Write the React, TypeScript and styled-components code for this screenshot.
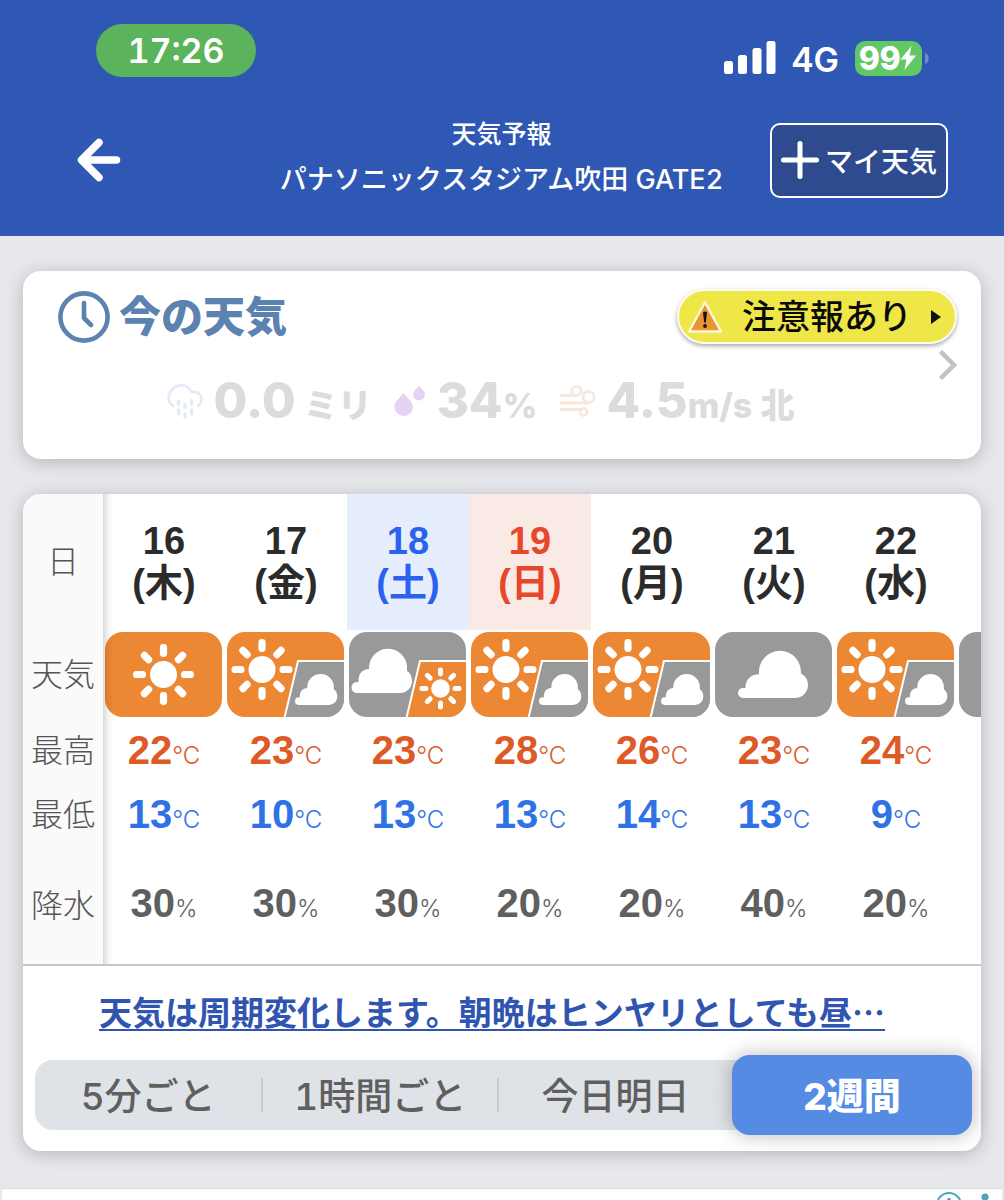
import React from "react";
import styled, { createGlobalStyle, css } from "styled-components";

const ui = `Inter, "Noto Sans CJK JP", sans-serif`;
const grotesk = `"Liberation Sans", "Noto Sans CJK JP", sans-serif`;
const japanese = `"Noto Sans CJK JP", sans-serif`;

const GlobalStyle = createGlobalStyle`
  *, *::before, *::after { box-sizing: border-box; }
  body { margin: 0; background: #e6e8ec; font-family: ${ui}; font-variant-numeric: tabular-nums; }
  button { font: inherit; border: 0; padding: 0; background: none; cursor: pointer; }
  svg { display: block; flex: none; }
`;

const Screen = styled.div`
  height: 100vh;
  display: flex;
  flex-direction: column;
  overflow: hidden;
`;

/* ---------- header ---------- */
const Header = styled.header`
  flex: none;
  background: #2f57b4;
  color: #fff;
  padding: 24px 56px 28px 77px;
`;
const StatusBar = styled.div`
  display: flex;
  justify-content: space-between;
  align-items: flex-start;
  padding: 0 19px;
`;
const TimePill = styled.div`
  width: 160px;
  height: 53px;
  border-radius: 27px;
  background: #5bb45c;
  font-size: 34px;
  font-weight: 600;
  line-height: 54px;
  text-align: center;
`;
const StatusRight = styled.div`
  display: flex;
  align-items: center;
  gap: 16px;
  padding-top: 14px;
  font-size: 34px;
  font-weight: 600;
  line-height: 36px;
`;
const Network = styled.span`
  padding-top: 4px;
`;
const Battery = styled.div`
  display: flex;
  align-items: center;
  gap: 3px;
`;
const BatteryBody = styled.div`
  display: flex;
  align-items: center;
  width: 67px;
  height: 35px;
  padding-left: 4px;
  border-radius: 10px;
  background: #62c866;
  font-size: 32px;
  font-weight: 800;
  line-height: 35px;
`;
const NavBar = styled.div`
  display: grid;
  grid-template-columns: 156px 1fr 178px;
  align-items: center;
  margin-top: 34px;
`;
const BackButton = styled.button`
  justify-self: start;
`;
const TitleBlock = styled.div`
  justify-self: center;
  padding-bottom: 6px;
  text-align: center;
  white-space: nowrap;
`;
const Title = styled.h1`
  margin: 0;
  font-size: 25px;
  font-weight: 500;
  line-height: 45px;
`;
const Place = styled.p`
  margin: 0;
  font-size: 27px;
  font-weight: 500;
  line-height: 45px;
`;
const AddButton = styled.button`
  display: flex;
  align-items: center;
  justify-content: center;
  gap: 6px;
  height: 75px;
  border: 2px solid #fff;
  border-radius: 10px;
  background: #2e4b8f;
  color: #fff;
  font-size: 28px;
  font-weight: 500;
  white-space: nowrap;
`;

/* ---------- cards ---------- */
const Main = styled.main`
  flex: none;
  display: grid;
  grid-template-columns: minmax(0, 1fr);
  gap: 35px;
  padding: 35px 23px 37px;
`;
const Card = styled.section`
  background: #fff;
  border-radius: 18px;
  box-shadow: 0 3px 18px rgba(0, 0, 0, 0.22);
`;
const NowCard = styled(Card)`
  padding: 18px 24px 31px 35px;
`;
const NowHead = styled.div`
  display: flex;
  justify-content: space-between;
  align-items: center;
`;
const NowTitle = styled.h2`
  display: flex;
  align-items: center;
  gap: 9px;
  margin: 0;
  color: #5c82b0;
  font-size: 42px;
  font-weight: 900;
  line-height: 54px;
`;
const Alert = styled.a`
  display: flex;
  align-items: center;
  height: 55px;
  padding: 0 14px 0 8px;
  border: 2px solid #fdfdf4;
  border-radius: 28px;
  background: #efe648;
  box-shadow: 0 2px 4px rgba(0, 0, 0, 0.35);
  color: #0a0a0a;
  font-size: 34px;
  font-weight: 500;
  line-height: 50px;
  text-decoration: none;
`;
const AlertText = styled.span`
  padding: 0 19px;
`;
const NowBody = styled.div`
  display: flex;
  align-items: flex-start;
  padding-top: 6px;
`;
const Metrics = styled.div`
  flex: 1;
  display: flex;
  justify-content: center;
  gap: 22px;
  padding: 24px 36px 0 0;
  color: #dcdcdc;
  font-variant-numeric: normal;
`;
const Metric = styled.div`
  display: flex;
  align-items: center;
  gap: 11px;
`;
const Value = styled.span`
  font-size: 49px;
  font-weight: 800;
  line-height: 54px;
  white-space: nowrap;
`;
const Unit = styled.span<{ $spaced?: boolean }>`
  font-size: 34px;
  font-weight: 800;
  line-height: 34px;
  ${(p) => p.$spaced && css`margin-left: 8px;`}
`;

/* ---------- forecast ---------- */
const Scroller = styled.div`
  overflow: hidden;
  border-radius: 18px 18px 0 0;
  border-bottom: 2px solid #c6c6c6;
`;
const Table = styled.table`
  width: 1056px;
  table-layout: fixed;
  border-collapse: separate;
  border-spacing: 0;
  font-family: ${grotesk};
  td, th { padding: 0; text-align: center; }
`;
const LabelCol = styled.col`
  width: 80px;
`;
const Row = styled.tr<{ $h: number }>`
  height: ${(p) => p.$h}px;
`;
const Label = styled.th`
  position: sticky;
  left: 0;
  z-index: 1;
  background: #fafafa;
  color: #555;
  font-size: 32px;
  font-weight: 300;
  line-height: 40px;
  &::after {
    content: "";
    position: absolute;
    top: 0;
    bottom: 0;
    left: 100%;
    width: 11px;
    background: linear-gradient(to right, rgba(0, 0, 0, 0.15), rgba(0, 0, 0, 0.04) 50%, transparent);
  }
`;
const dayColors = {
  week: ["#2b2b2b", "transparent"],
  sat: ["#2a62ee", "#e6edfd"],
  sun: ["#e8482a", "#faeae6"],
};
type DayKind = keyof typeof dayColors;
const DayCell = styled.th<{ $kind: DayKind }>`
  color: ${(p) => dayColors[p.$kind][0]};
  background: ${(p) => dayColors[p.$kind][1]};
  font-size: 38px;
  font-weight: 700;
  line-height: 42px;
`;
const DayName = styled.span`
  display: block;
`;
const IconCell = styled.td`
  svg { margin: 0 2px; }
`;
const tones = { high: "#dd5a26", low: "#2f72e6", rain: "#5f5f5f" };
const NumCell = styled.td<{ $tone: keyof typeof tones }>`
  && { padding-top: ${(p) => (p.$tone === "rain" ? 0 : 4)}px; }
  color: ${(p) => tones[p.$tone]};
  font-size: 40px;
  font-weight: 700;
  line-height: 48px;
  white-space: nowrap;
`;
const Small = styled.span`
  font-family: ${ui};
  font-size: 24px;
  font-weight: 300;
`;

const Comment = styled.p`
  margin: 0;
  padding: 18px 86px 0 66px;
  text-align: center;
  font-family: ${japanese};
  font-size: 33px;
  font-weight: 700;
  line-height: 54px;
  white-space: nowrap;
`;
const CommentLink = styled.a`
  color: #2f55b0;
  text-decoration: underline;
  text-decoration-thickness: 2px;
  text-underline-offset: 4px;
`;
const Tabs = styled.div`
  display: grid;
  grid-template-columns: 57fr 59fr 58fr 60fr;
  grid-template-rows: 100%;
  align-items: center;
  height: 70px;
  margin: 22px 9px 21px 12px;
  border-radius: 18px;
  background: #dfe2e6;
`;
const Tab = styled.button<{ $active?: boolean; $divided?: boolean }>`
  height: 34px;
  color: #5f5f5f;
  font-size: 37px;
  font-weight: 500;
  line-height: 38px;
  white-space: nowrap;
  ${(p) => p.$divided && css`border-right: 2px solid #c9cbcf;`}
  ${(p) => p.$active && css`
    height: 80px;
    padding-top: 4px;
    border-radius: 18px;
    background: #568be4;
    color: #fff;
    font-weight: 800;
    box-shadow: 0 0 20px rgba(0, 0, 0, 0.28);
  `}
`;

/* ---------- advertisement strip ---------- */
const AdStrip = styled.aside`
  flex: 1;
  min-height: 0;
  display: flex;
  justify-content: flex-end;
  gap: 19px;
  margin: 0 2px;
  padding: 3px 13px 0 0;
  overflow: hidden;
  background: #fff;
  border-top: 1px solid #dcdcdc;
`;

/* ---------- drawings ---------- */
const angles = [0, 45, 90, 135, 180, 225, 270, 315];

const Sun = ({ x, y, k = 1 }: { x: number; y: number; k?: number }) => (
  <g transform={`translate(${x} ${y}) scale(${k})`} fill="#fff">
    <circle r="13.5" />
    {angles.map((a) => (
      <rect key={a} x="-3.6" y="-30.5" width="7.2" height="13" rx="3.4" transform={`rotate(${a})`} />
    ))}
  </g>
);
const Cloud = ({ x, y, k = 1 }: { x: number; y: number; k?: number }) => (
  <path
    transform={`translate(${x} ${y}) scale(${k})`}
    fill="#fff"
    d="M5 47a5 5 0 0 1 0-10h2.500C7 29 13 23 21.100 23.200A21 21 0 1 1 62.900 22.500C68 25 70 29.500 70 34A13 13 0 0 1 57 47Z"
  />
);
/* narrower outline used where a second symbol shares the tile */
const SlimCloud = ({ x, y, k = 1 }: { x: number; y: number; k?: number }) => (
  <path
    transform={`translate(${x} ${y}) scale(${k})`}
    fill="#fff"
    d="M5.500 47a5.500 5.500 0 0 1 0-11h1.500C6.500 28 11 23 17.500 23A19 19 0 1 1 55.500 20.500V25C58.500 26.500 60.500 30.500 60.500 35A12 12 0 0 1 48.500 47Z"
  />
);

type Sky = "sun" | "sunCloud" | "cloudSun" | "cloud";
const names: Record<Sky, string> = { sun: "晴れ", sunCloud: "晴れ時々曇り", cloudSun: "曇り時々晴れ", cloud: "曇り" };
const ORANGE = "#ec8733";
const GRAY = "#999";

const WeatherIcon = ({ sky, id }: { sky: Sky; id: string }) => {
  const base = sky === "sun" || sky === "sunCloud" ? ORANGE : GRAY;
  const sub = sky === "sunCloud" ? GRAY : ORANGE;
  return (
    <svg width="117" height="85" viewBox="0 0 117 85" role="img" aria-label={names[sky]}>
      <clipPath id={id}><rect width="117" height="85" rx="18" /></clipPath>
      <g clipPath={`url(#${id})`}>
        <rect width="117" height="85" fill={base} />
        {sky === "sun" && <Sun x={58.5} y={42.5} />}
        {sky === "cloud" && <Cloud x={23} y={19} />}
        {sky === "sunCloud" && <Sun x={35} y={37.5} />}
        {sky === "cloudSun" && <SlimCloud x={2.5} y={14} />}
        {(sky === "sunCloud" || sky === "cloudSun") && (
          <>
            <path d="M71 29H120V90H56.500Z" fill={sub} stroke="#fff" strokeWidth="2" />
            {sky === "sunCloud" ? <SlimCloud x={68} y={40} k={0.7} /> : <Sun x={91.5} y={56.5} k={0.69} />}
          </>
        )}
      </g>
    </svg>
  );
};

const SignalIcon = () => (
  <svg width="52" height="34" viewBox="0 0 52 34" fill="#fff" aria-hidden="true">
    <rect x="0" y="20" width="9" height="13" rx="2.5" />
    <rect x="14" y="14" width="9" height="19" rx="2.5" />
    <rect x="28.5" y="7" width="9" height="26" rx="2.5" />
    <rect x="42.5" y="0" width="9" height="33" rx="2.5" />
  </svg>
);
const BoltIcon = () => (
  <svg width="16" height="24" viewBox="0 0 16 24" fill="#fff" aria-hidden="true">
    <path d="M11.500 0 0.500 13.500H6.500L4.500 24 16 9.500H9.500Z" />
  </svg>
);
const BatteryTip = () => (
  <svg width="4" height="11" viewBox="0 0 4 11" aria-hidden="true">
    <path d="M0 0C5 1 5 10 0 11Z" fill="#6f8ccb" />
  </svg>
);
const BackIcon = () => (
  <svg width="44" height="44" viewBox="0 0 44 44" fill="none" stroke="#fff" strokeWidth="7.5" strokeLinecap="round" strokeLinejoin="round" aria-hidden="true">
    <path d="M22 4.500 4.500 22 22 39.500M5 22H39.500" />
  </svg>
);
const PlusIcon = () => (
  <svg width="38" height="38" viewBox="0 0 38 38" stroke="#fff" strokeWidth="5" strokeLinecap="round" aria-hidden="true">
    <path d="M19 2.500V35.500M2.500 19H35.500" />
  </svg>
);
const ClockIcon = () => (
  <svg width="52" height="52" viewBox="0 0 52 52" fill="none" stroke="#5c82b0" strokeWidth="4.6" strokeLinecap="round" strokeLinejoin="round" aria-hidden="true">
    <circle cx="26" cy="26" r="23.6" />
    <path d="M26 12V27L33 34" />
  </svg>
);
const WarningIcon = () => (
  <svg width="36" height="34" viewBox="0 0 36 34" aria-hidden="true">
    <path d="M18 2.500 34 31.500H2Z" fill="#eb9433" stroke="#fff8d8" strokeWidth="2.4" strokeLinejoin="round" />
    <path d="M16 12.500Q18 10.500 20 12.500L18.800 22.500H17.200Z" fill="#111" />
    <circle cx="18" cy="26" r="1.9" fill="#111" />
  </svg>
);
const PlayIcon = () => (
  <svg width="10" height="14" viewBox="0 0 10 14" aria-hidden="true"><path d="M0 0 10 7 0 14Z" fill="#111" /></svg>
);
const ChevronIcon = () => (
  <svg width="18" height="30" viewBox="0 0 18 30" fill="none" stroke="#c2c2c2" strokeWidth="4.5" aria-hidden="true">
    <path d="M1.500 1.500 15 15 1.500 28.500" />
  </svg>
);
const RainIcon = () => (
  <svg width="36" height="36" viewBox="0 0 36 36" fill="none" stroke="#e2eaf6" strokeWidth="2.6" strokeLinecap="round" aria-hidden="true">
    <path d="M6 23C0 18 .500 11 5.500 6C11 .500 21 1 24.500 9C31 7.500 35 12 34.500 17C34.300 19.500 33 21.500 31.500 23" />
    <path d="M11.500 18V21M11.500 27V31M18 21.500V24.500M18 31V34M24.500 18V21M24.500 27V31" strokeWidth="3.4" />
  </svg>
);
const DropsIcon = () => (
  <svg width="32" height="30" viewBox="0 0 32 30" fill="#e5d3f5" aria-hidden="true">
    <path d="M9.500 7C13 12 19 15.500 19 21A9.300 9 0 0 1 .400 21C.400 15.500 6 12 9.500 7Z" />
    <path d="M25 0C27 3 31 5 31 8.500A6 6 0 0 1 19 8.500C19 5 23 3 25 0Z" />
  </svg>
);
const WindIcon = () => (
  <svg width="36" height="32" viewBox="0 0 36 32" fill="none" stroke="#f8e8da" strokeWidth="2.8" aria-hidden="true">
    <path d="M0 10.500H16M0 18H28M0 24.500H23" />
    <circle cx="16.5" cy="6" r="4.6" />
    <circle cx="28.5" cy="12" r="5.6" />
    <circle cx="23.5" cy="27" r="3.6" />
  </svg>
);
const AdInfoIcon = () => (
  <svg width="26" height="26" viewBox="0 0 26 26" fill="none" stroke="#4aa7bd" aria-hidden="true">
    <circle cx="13" cy="13" r="12" strokeWidth="2" />
    <circle cx="13" cy="7.5" r="1.8" fill="#4aa7bd" stroke="none" />
    <path d="M13 11V20" strokeWidth="3" />
  </svg>
);
const AdMenuIcon = () => (
  <svg width="8" height="28" viewBox="0 0 8 28" fill="#4aa7bd" aria-hidden="true">
    <circle cx="4" cy="5" r="3.6" /><circle cx="4" cy="15" r="3.6" /><circle cx="4" cy="25" r="3.6" />
  </svg>
);

/* ---------- data ---------- */
const days: { date: number; name: string; kind: DayKind; sky: Sky; high: number; low: number; rain: number }[] = [
  { date: 16, name: "木", kind: "week", sky: "sun", high: 22, low: 13, rain: 30 },
  { date: 17, name: "金", kind: "week", sky: "sunCloud", high: 23, low: 10, rain: 30 },
  { date: 18, name: "土", kind: "sat", sky: "cloudSun", high: 23, low: 13, rain: 30 },
  { date: 19, name: "日", kind: "sun", sky: "sunCloud", high: 28, low: 13, rain: 20 },
  { date: 20, name: "月", kind: "week", sky: "sunCloud", high: 26, low: 14, rain: 20 },
  { date: 21, name: "火", kind: "week", sky: "cloud", high: 23, low: 13, rain: 40 },
  { date: 22, name: "水", kind: "week", sky: "sunCloud", high: 24, low: 9, rain: 20 },
];

export default function App() {
  return (
    <Screen>
      <GlobalStyle />
      <Header>
        <StatusBar>
          <TimePill>17:26</TimePill>
          <StatusRight>
            <SignalIcon />
            <Network>4G</Network>
            <Battery>
              <BatteryBody>99<BoltIcon /></BatteryBody>
              <BatteryTip />
            </Battery>
          </StatusRight>
        </StatusBar>
        <NavBar>
          <BackButton aria-label="戻る"><BackIcon /></BackButton>
          <TitleBlock>
            <Title>天気予報</Title>
            <Place>パナソニックスタジアム吹田 GATE2</Place>
          </TitleBlock>
          <AddButton><PlusIcon />マイ天気</AddButton>
        </NavBar>
      </Header>

      <Main>
        <NowCard>
          <NowHead>
            <NowTitle><ClockIcon />今の天気</NowTitle>
            <Alert href="#alert"><WarningIcon /><AlertText>注意報あり</AlertText><PlayIcon /></Alert>
          </NowHead>
          <NowBody>
            <Metrics>
              <Metric><RainIcon /><Value>0.0<Unit $spaced>ミリ</Unit></Value></Metric>
              <Metric><DropsIcon /><Value>34<Unit>%</Unit></Value></Metric>
              <Metric><WindIcon /><Value>4.5<Unit>m/s</Unit><Unit $spaced>北</Unit></Value></Metric>
            </Metrics>
            <button aria-label="詳細"><ChevronIcon /></button>
          </NowBody>
        </NowCard>

        <Card>
          <Scroller>
            <Table>
              <colgroup><LabelCol />{[...days, null].map((_, i) => <col key={i} />)}</colgroup>
              <tbody>
                <Row $h={136}>
                  <Label scope="row">日</Label>
                  {days.map((d) => (
                    <DayCell key={d.date} scope="col" $kind={d.kind}>{d.date}<DayName>({d.name})</DayName></DayCell>
                  ))}
                  <td />
                </Row>
                <Row $h={89}>
                  <Label scope="row">天気</Label>
                  {days.map((d) => <IconCell key={d.date}><WeatherIcon sky={d.sky} id={`sky${d.date}`} /></IconCell>)}
                  <IconCell><WeatherIcon sky="cloud" id="sky23" /></IconCell>
                </Row>
                <Row $h={64}>
                  <Label scope="row">最高</Label>
                  {days.map((d) => <NumCell key={d.date} $tone="high">{d.high}<Small>°C</Small></NumCell>)}
                  <td />
                </Row>
                <Row $h={64}>
                  <Label scope="row">最低</Label>
                  {days.map((d) => <NumCell key={d.date} $tone="low">{d.low}<Small>°C</Small></NumCell>)}
                  <td />
                </Row>
                <Row $h={117}>
                  <Label scope="row">降水</Label>
                  {days.map((d) => <NumCell key={d.date} $tone="rain">{d.rain}<Small>%</Small></NumCell>)}
                  <td />
                </Row>
              </tbody>
            </Table>
          </Scroller>
          <Comment><CommentLink href="#comment">天気は周期変化します。朝晩はヒンヤリとしても昼…</CommentLink></Comment>
          <Tabs role="tablist">
            <Tab role="tab" aria-selected={false} $divided>5分ごと</Tab>
            <Tab role="tab" aria-selected={false} $divided>1時間ごと</Tab>
            <Tab role="tab" aria-selected={false}>今日明日</Tab>
            <Tab role="tab" aria-selected $active>2週間</Tab>
          </Tabs>
        </Card>
      </Main>

      <AdStrip><AdInfoIcon /><AdMenuIcon /></AdStrip>
    </Screen>
  );
}
